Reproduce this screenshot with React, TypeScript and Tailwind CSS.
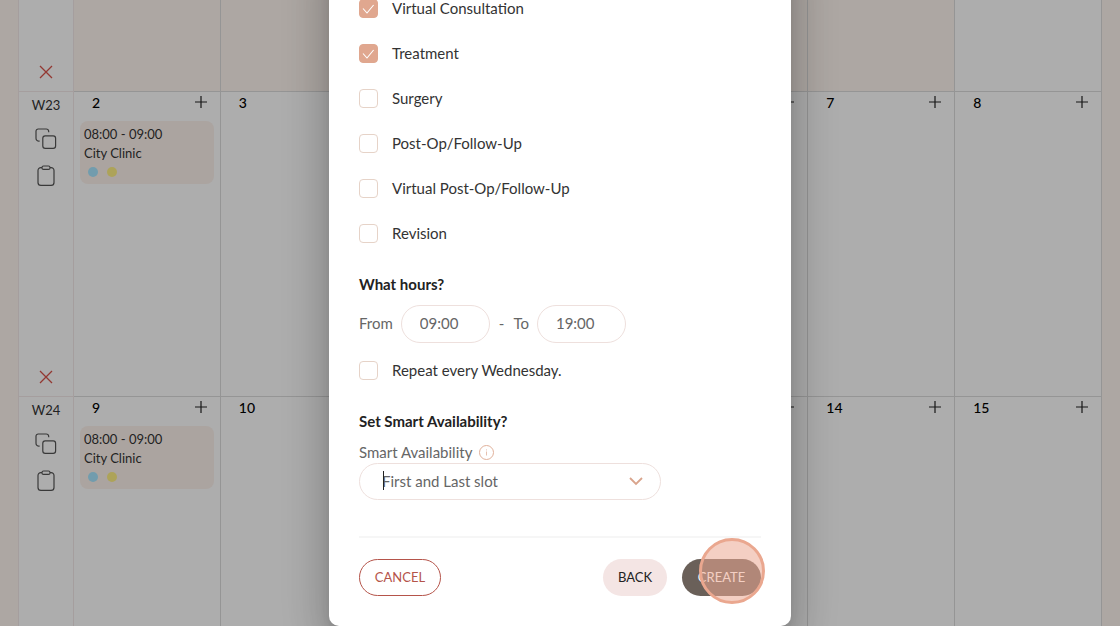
import { useState } from "react";
import { clsx } from "clsx";

interface Slot {
  hours: string;
  clinic: string;
}

interface Day {
  date?: number;
  slot?: Slot;
  muted?: boolean;
}

interface Week {
  label?: string;
  size: string;
  days: Day[];
}

const clinicSlot: Slot = { hours: "08:00 - 09:00", clinic: "City Clinic" };

const weeks: Week[] = [
  {
    size: "h-[92px]",
    days: [
      { muted: true },
      { muted: true },
      { muted: true },
      { muted: true },
      { muted: true },
      { muted: true },
      {},
    ],
  },
  {
    label: "W23",
    size: "h-[305px]",
    days: [{ date: 2, slot: clinicSlot }, { date: 3 }, {}, {}, {}, { date: 7 }, { date: 8 }],
  },
  {
    label: "W24",
    size: "h-[305px]",
    days: [{ date: 9, slot: clinicSlot }, { date: 10 }, {}, {}, {}, { date: 14 }, { date: 15 }],
  },
];

const appointmentTypes = [
  "Virtual Consultation",
  "Treatment",
  "Surgery",
  "Post-Op/Follow-Up",
  "Virtual Post-Op/Follow-Up",
  "Revision",
];

const CopyIcon = () => (
  <svg width="22" height="22" viewBox="0 0 22 22" fill="none" stroke="#555" strokeWidth="1.2">
    <path d="M4.6 13.2H4A3 3 0 0 1 1 10.2V3.2A2.2 2.2 0 0 1 3.2 1h8.1a2.4 2.4 0 0 1 2.4 2.4v.9" />
    <rect x="7.8" y="7.8" width="12.8" height="12.6" rx="2.4" />
  </svg>
);

const ClipboardIcon = () => (
  <svg width="18" height="22" viewBox="0 0 18 22" fill="none" stroke="#555" strokeWidth="1.2">
    <path d="M5 2.6H3.9A2.9 2.9 0 0 0 1 5.5v12a2.9 2.9 0 0 0 2.9 2.9h10.2a2.9 2.9 0 0 0 2.9-2.9v-12a2.9 2.9 0 0 0-2.9-2.9H13" />
    <rect x="5" y="1" width="8" height="3.4" rx="1.5" />
  </svg>
);

const CrossIcon = () => (
  <svg width="14" height="14" viewBox="0 0 14 14" fill="none" stroke="#d9534a" strokeWidth="1.3">
    <path d="M1 1l12 12M13 1L1 13" />
  </svg>
);

const PlusIcon = () => (
  <svg width="12" height="12" viewBox="0 0 12 12" fill="none" stroke="#222" strokeWidth="1.2">
    <path d="M6 0v12M0 6h12" />
  </svg>
);

const DayCell = ({ date, slot, muted, canAdd }: Day & { canAdd: boolean }) => (
  <div
    className={clsx(
      "min-w-0 border-b border-r border-[#dcdcdc] px-[6px] pt-0.5",
      muted && "bg-[#fff7f0]"
    )}
  >
    {canAdd && (
      <div className="flex h-[15px] items-center justify-between pl-3 pr-[7px]">
        <span className="pt-0.5 text-sm font-medium text-black">{date}</span>
        <button type="button" aria-label="Add slot">
          <PlusIcon />
        </button>
      </div>
    )}
    {slot && (
      <div className="mt-3 h-[63px] rounded-lg bg-[#fdf2ec] px-1 pt-1 text-[13px] leading-[19px] text-[#333]">
        <p>{slot.hours}</p>
        <p>{slot.clinic}</p>
        <div className="flex gap-[9px] pl-1 pt-1">
          <span className="size-[10px] rounded-full bg-[#a8e6ff]" />
          <span className="size-[10px] rounded-full bg-[#fff084]" />
        </div>
      </div>
    )}
  </div>
);

const WeekRow = ({ label, size, days }: Week) => (
  <div className={clsx("flex shrink-0", size)}>
    <div className="flex w-14 shrink-0 flex-col items-center border-x border-b border-[#f3e9e9]">
      {label && (
        <>
          <span className="mt-[3px] text-[13px] leading-5 text-[#333]">{label}</span>
          <button type="button" aria-label="Copy week" className="mt-[13px]">
            <CopyIcon />
          </button>
          <button type="button" aria-label="Paste week" className="mt-[15px]">
            <ClipboardIcon />
          </button>
        </>
      )}
      <button type="button" aria-label="Clear week" className="mb-3 mt-auto">
        <CrossIcon />
      </button>
    </div>
    <div className="grid min-w-0 flex-1 grid-cols-7">
      {days.map((day, i) => (
        <DayCell key={i} {...day} canAdd={Boolean(label)} />
      ))}
    </div>
  </div>
);

interface CheckRowProps {
  label: string;
  checked: boolean;
  onChange: () => void;
}

const CheckRow = ({ label, checked, onChange }: CheckRowProps) => (
  <label className="flex h-[45px] items-center gap-[14px] text-[#333]">
    <span className="relative flex">
      <input
        type="checkbox"
        checked={checked}
        onChange={onChange}
        className="size-[19px] appearance-none rounded-[4px] border border-[#e6d3c8] checked:border-[#e0a78f] checked:bg-[#e0a78f]"
      />
      {checked && (
        <svg
          className="pointer-events-none absolute inset-0"
          width="19"
          height="19"
          viewBox="0 0 19 19"
          fill="none"
          stroke="#fff"
          strokeWidth="1.1"
        >
          <path d="M4 9.5l4 4.5 6.6-8" />
        </svg>
      )}
    </span>
    <span className="pb-0.5">{label}</span>
  </label>
);

export default function App() {
  const [selected, setSelected] = useState(["Virtual Consultation", "Treatment"]);
  const [repeat, setRepeat] = useState(false);

  const toggle = (type: string) =>
    setSelected((prev) =>
      prev.includes(type) ? prev.filter((t) => t !== type) : [...prev, type]
    );

  return (
    <div className="relative h-screen overflow-hidden bg-[#fff7f0] font-['Lato',sans-serif]">
      <main className="mx-[18px] flex h-full flex-col bg-white">
        {weeks.map((week, i) => (
          <WeekRow key={i} {...week} />
        ))}
      </main>

      {/* Dimmed backdrop with the dialog scrolled to its end */}
      <div className="absolute inset-0 flex items-end justify-center bg-black/32">
        <div
          role="dialog"
          aria-label="Add availability"
          className="w-[462px] rounded-[10px] bg-white px-[30px] pb-[30px] pt-10 text-[15px] leading-5 shadow-[0_11px_15px_-7px_rgba(0,0,0,0.2),0_24px_38px_3px_rgba(0,0,0,0.14),0_9px_46px_8px_rgba(0,0,0,0.12)]"
        >
          {appointmentTypes.map((type) => (
            <CheckRow
              key={type}
              label={type}
              checked={selected.includes(type)}
              onChange={() => toggle(type)}
            />
          ))}

          <h2 className="mt-[18px] font-bold text-[#222]">What hours?</h2>
          <div className="mt-[11px] flex items-center text-[#666]">
            <label htmlFor="from" className="pb-0.5">
              From
            </label>
            <input
              id="from"
              defaultValue="09:00"
              className="ml-2 h-[38px] w-[89px] rounded-full border border-[#eee0dd] px-[18px] pb-0.5"
            />
            <span className="mx-[9px] pb-0.5">-</span>
            <label htmlFor="to" className="pb-0.5">
              To
            </label>
            <input
              id="to"
              defaultValue="19:00"
              className="ml-2 h-[38px] w-[89px] rounded-full border border-[#eee0dd] px-[18px] pb-0.5"
            />
          </div>
          <div className="mt-[5px]">
            <CheckRow
              label="Repeat every Wednesday."
              checked={repeat}
              onChange={() => setRepeat(!repeat)}
            />
          </div>

          <h2 className="mt-[18px] font-bold text-[#222]">Set Smart Availability?</h2>
          <div className="mt-[11px] flex h-[21px] items-center gap-[7px] text-[#666]">
            <label htmlFor="smart" className="pb-0.5">
              Smart Availability
            </label>
            <svg width="15" height="15" viewBox="0 0 15 15" fill="none" stroke="#e0b09a">
              <circle cx="7.5" cy="7.5" r="7" />
              <path d="M7.5 6.5v4M7.5 4.4v1" strokeWidth="0.8" />
            </svg>
          </div>
          <div className="relative w-[302px]">
            <select
              id="smart"
              className="h-[37px] w-full appearance-none rounded-full border border-[#eee0dd] px-[22px] pb-0.5 text-[#666]"
            >
              <option>First and Last slot</option>
            </select>
            <span className="absolute left-6 top-2 h-[19px] w-px bg-[#222]" />
            <svg
              className="pointer-events-none absolute right-[18px] top-[14px]"
              width="14"
              height="9"
              viewBox="0 0 14 9"
              fill="none"
              stroke="#d9a48c"
              strokeWidth="1.8"
            >
              <path d="M1 1l6 6 6-6" />
            </svg>
          </div>

          <div className="mt-9 flex gap-[15px] border-t-2 border-[#f6f6f6] pt-[21px] text-[13px]">
            <button
              type="button"
              className="mr-auto h-[37px] w-[82px] rounded-full border border-[#b5544a] pb-0.5 text-[#b5544a]"
            >
              CANCEL
            </button>
            <button
              type="button"
              className="h-[37px] w-16 rounded-full bg-[#f4e5e4] pb-0.5 text-[#222]"
            >
              BACK
            </button>
            <div className="relative">
              <button
                type="button"
                className="h-[37px] w-[79px] rounded-full bg-[#6a6059] pb-0.5 text-white"
              >
                CREATE
              </button>
              {/* Click highlight */}
              <span className="pointer-events-none absolute -right-1 -top-[21px] size-[66px] rounded-full border-[3px] border-[#eaa78f] bg-[#eba791]/55" />
            </div>
          </div>
        </div>
      </div>
    </div>
  );
}
